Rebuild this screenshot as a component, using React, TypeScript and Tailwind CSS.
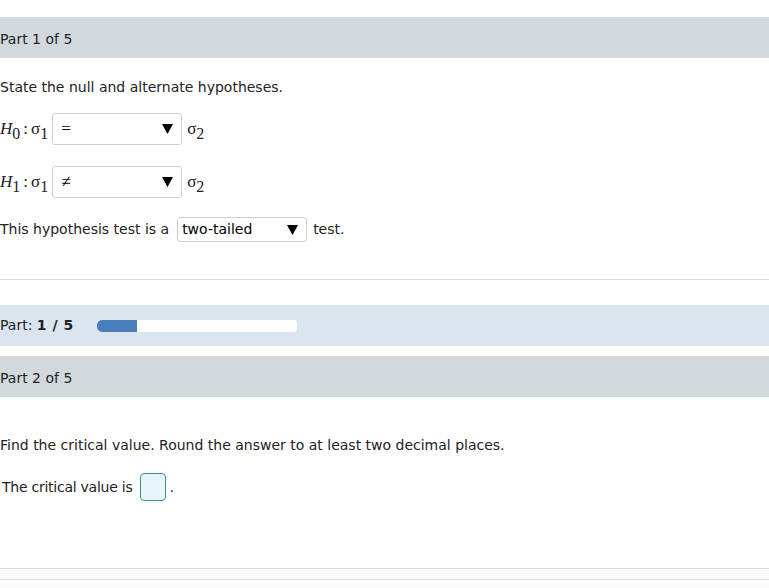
import React from "react";

const sans = "font-['DejaVu_Sans',Verdana,sans-serif]";
const serif = "font-['Liberation_Serif','Times_New_Roman',serif]";

const Caret = () => (
  <svg width="11" height="10" viewBox="0 0 11 10" className="shrink-0">
    <path d="M0 0h11L5.5 10z" fill="#000" />
  </svg>
);

const Select = ({ value, className }: { value: string; className?: string }) => (
  <div
    className={`flex items-center justify-between rounded-[3px] border border-[#cfcfcf] bg-white ${className ?? ""}`}
  >
    <span className="text-black">{value}</span>
    <Caret />
  </div>
);

const Sub = ({ children }: { children: React.ReactNode }) => (
  <sub className="relative top-[5px] align-baseline text-[16px]">{children}</sub>
);

const Sigma = ({ sub }: { sub: string }) => (
  <span className={`${serif} text-[17px] text-[#222]`}>
    σ<Sub>{sub}</Sub>
  </span>
);

const Hyp = ({ h, op }: { h: string; op: string }) => (
  <div className="flex h-[32px] items-center">
    <span className={`${serif} text-[17px] text-[#222]`}>
      <i>H</i>
      <Sub>{h}</Sub>
      <span className="px-[3px]">:</span>
    </span>
    <Sigma sub="1" />
    <Select value={op} className={`${serif} ml-[4px] h-[32px] w-[130px] pl-[8px] pr-[8px] text-[17px]`} />
    <span className="ml-[5px]">
      <Sigma sub="2" />
    </span>
  </div>
);

const Band = ({ children }: { children: React.ReactNode }) => (
  <div className="flex h-[41px] items-center bg-[#d2d9dd] pt-[3px] text-[#222]">{children}</div>
);

export default function App() {
  const [progress] = React.useState(20);
  return (
    <div className={`${sans} h-[588px] w-[769px] overflow-hidden bg-white text-[14px] text-[#222]`}>
      <div className="h-[17px]" />
      <Band>Part 1 of 5</Band>
      <div className="pt-[21px]">
        <p className="h-[17px] leading-[17px]">State the null and alternate hypotheses.</p>
        <div className="mt-[17px] flex flex-col gap-[21px]">
          <Hyp h="0" op="=" />
          <Hyp h="1" op="≠" />
        </div>
        <div className="mt-[19px] flex items-center">
          <span>This hypothesis test is a</span>
          <Select value="two-tailed" className="ml-[8px] h-[25px] w-[130px] pl-[4px] pr-[8px]" />
          <span className="ml-[6px]">test.</span>
        </div>
      </div>
      <div className="mt-[37px] border-t border-[#dcdcdc]" />
      <div className="mt-[25px] flex h-[41px] items-center bg-[#dae5ef]">
        <span>
          Part: <b className="tracking-[0.5px]">1 / 5</b>
        </span>
        <div className="ml-[23px] h-[12px] w-[200px] rounded-[3px] bg-white">
          <div className="h-full rounded-l-[5px] bg-[#4a7ebb]" style={{ width: `${progress}%` }} />
        </div>
      </div>
      <div className="h-[10px]" />
      <Band>Part 2 of 5</Band>
      <p className="mt-[40px] h-[17px] leading-[17px]">
        Find the critical value. Round the answer to at least two decimal places.
      </p>
      <div className="mt-[19px] flex items-center pl-[2px]">
        <span className="tracking-[-0.25px]">The critical value is</span>
        <div className="ml-[8px] h-[28px] w-[26px] rounded-[4px] border border-[#3e8a96] bg-[#e5f5fb]" />
        <span className="ml-[3px]">.</span>
      </div>
      <div className="mt-[67px] border-t border-[#d6d6d6]" />
      <div className="h-[10px] bg-[#fbfbfb]" />
      <div className="border-t border-[#dedede]" />
      <div className="h-[8px] bg-[#fbfbfb]" />
    </div>
  );
}
